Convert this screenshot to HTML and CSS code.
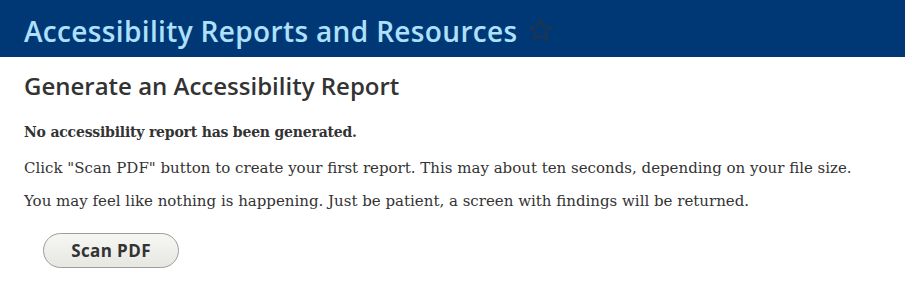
FILE: index.html
```html
<!DOCTYPE html>
<html lang="en">
<head>
<meta charset="utf-8">
<title>Accessibility Reports and Resources</title>
<link rel="stylesheet" href="styles.css">
</head>
<body>
<header class="page-header">
  <h1 class="page-title">Accessibility Reports and Resources</h1>
  <svg class="star" width="25" height="24" viewBox="0 0 25 24" aria-hidden="true">
    <path d="M12.5 1.5 L15.2 9 L23.2 9.2 L16.9 14.1 L19.2 21.8 L12.5 17.4 L5.8 21.8 L8.1 14.1 L1.8 9.2 L9.8 9 Z" fill="none" stroke="#333333" stroke-width="1.1" stroke-linejoin="miter"/>
  </svg>
</header>
<main class="content">
  <h2 class="section-title">Generate an Accessibility Report</h2>
  <p class="status">No accessibility report has been generated.</p>
  <p class="text">Click "Scan PDF" button to create your first report. This may about ten seconds, depending on your file size.</p>
  <p class="text">You may feel like nothing is happening. Just be patient, a screen with findings will be returned.</p>
  <div class="actions">
    <button class="btn" type="button">Scan PDF</button>
  </div>
</main>
</body>
</html>
```
FILE: styles.css
```css
html, body {
  margin: 0;
  padding: 0;
  background: #ffffff;
}
body {
  font-family: "DejaVu Serif", "Liberation Serif", serif;
  color: #333333;
}
.page-header {
  background: #003876;
  height: 57px;
  box-sizing: border-box;
  display: flex;
  align-items: center;
  padding: 4px 24px 0;
  gap: 10px;
}
.page-title {
  margin: 0;
  font-family: "Open Sans", "DejaVu Sans", sans-serif;
  font-weight: 600;
  font-size: 28px;
  line-height: 36px;
  letter-spacing: 0.35px;
  color: #aee0fb;
}
.star {
  display: block;
  margin-top: -1px;
}
.content {
  padding: 13px 24px 0;
}
.section-title {
  margin: 0 0 20px;
  font-family: "Open Sans", "DejaVu Sans", sans-serif;
  font-weight: 600;
  font-size: 24px;
  color: #333333;
  line-height: 32px;
}
.status {
  margin: 0 0 16px;
  font-size: 14px;
  font-weight: bold;
  line-height: 20px;
  letter-spacing: -0.2px;
}
.status + .text {
  margin-top: 16px;
}
.text {
  margin: 13px 0 0;
  font-size: 15px;
  line-height: 20px;
}
.actions {
  padding: 22px 0 0 19px;
}
.btn {
  font-family: "Open Sans", "DejaVu Sans", sans-serif;
  font-weight: 700;
  font-size: 17px;
  letter-spacing: 0.4px;
  color: #333333;
  width: 136px;
  height: 35px;
  border: 1px solid #9c9c9c;
  border-radius: 18px;
  background: linear-gradient(#f6f6f3, #e7e7e2);
  padding: 0;
  cursor: pointer;
}
```
